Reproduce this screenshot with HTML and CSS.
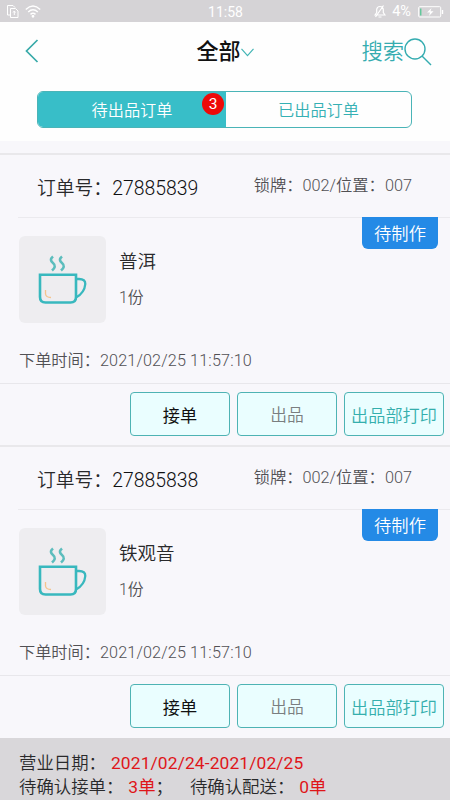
FILE: index.html
```html
<!DOCTYPE html>
<html lang="zh-CN">
<head>
<meta charset="utf-8">
<title>全部</title>
<link rel="stylesheet" href="styles.css">
</head>
<body>
<svg class="defs" width="0" height="0">
  <symbol id="cup" viewBox="0 0 87 87">
    <g fill="none" stroke="#38b8be" stroke-width="2.6">
      <path d="M21 38.800H57V61Q57 66.500 51.500 66.500H26.500Q21 66.500 21 61Z"/>
      <path d="M57 43H60Q66.500 43 66.300 48Q65.500 57 57 61.500" stroke-width="2.300"/>
      <path d="M34 20.500C31 23 31.500 25 34 27C37 29.500 36 32 33 34.500M43 20.500C40 23 40.500 25 43 27C46 29.500 45 32 42 34.500" stroke="#5cbdbd"/>
    </g>
    <path d="M26.500 54V58Q27 61.500 32 61.500" fill="none" stroke="#f5c48d" stroke-width="1.300"/>
  </symbol>
</svg>
<div class="status">
  <div class="status-left">
    <svg width="12" height="13" viewBox="0 0 12 13" fill="none" stroke="#fff"><path d="M3 10H.5V.5H6L8 2.500M3.500 3.500H8.500L11 6V12.500H3.500ZM7.300 6V10M6 7.500L7.300 6L8.500 7.500"/></svg>
    <svg width="16" height="13" viewBox="0 0 16 13" fill="none" stroke="#fff" stroke-width="1.400"><path d="M.8 4.500Q8-2.300 15.200 4.500M3.200 7Q8 2.500 12.800 7M5.500 9.400Q8 7.200 10.500 9.400"/><circle cx="8" cy="11.300" r=".7" fill="#fff"/></svg>
  </div>
  <div class="clock">11:58</div>
  <div class="status-right">
    <svg width="12" height="13" viewBox="0 0 12 13" fill="none" stroke="#fff" stroke-width="1.200"><path d="M1 10H11L9.300 7.500V4.500Q9 1.500 6 1.500Q3 1.500 2.700 4.500V7.500ZM4.500 12H7.500M9.500 .5L1.500 12"/></svg>
    <span class="percent">4%</span>
    <svg width="26" height="12" viewBox="0 0 26 12" fill="none" stroke="#fff"><rect x=".7" y=".7" width="22" height="10.300" rx="1"/><path d="M24.500 4V8" stroke-width="1.400"/><path d="M2.700 2.500V9.500" stroke="#62c79b" stroke-width="1.500"/><path d="M13.500 2L9 6.500H12L11 10L15.500 5.300H12.500Z" fill="#fff" stroke="none"/></svg>
  </div>
</div>
<header class="header">
  <div class="nav">
    <svg class="back" width="14" height="24" viewBox="0 0 14 24"><path d="M12.500 1L1.500 12L12.500 23" fill="none" stroke="#38aaa9" stroke-width="1.700"/></svg>
    <div class="title">全部<svg width="13" height="9" viewBox="0 0 13 9"><path d="M.5 .8L6.500 7.700L12.500 .8" fill="none" stroke="#43b5b5" stroke-width="1.200"/></svg></div>
    <div class="search">搜索<svg width="28" height="28" viewBox="0 0 28 28"><g fill="none" stroke="#35acb0" stroke-width="1.400"><circle cx="11" cy="11" r="10"/><path d="M18 18L27 27"/></g></svg></div>
  </div>
  <div class="tabs">
    <div class="tab active">待出品订单<span class="badge">3</span></div>
    <div class="tab">已出品订单</div>
  </div>
</header>
<main>
  <section class="order">
    <div class="order-head"><span class="number">订单号：<span class="digits">27885839</span></span><span class="place">锁牌：002/位置：007</span></div>
    <div class="order-body">
      <span class="tag">待制作</span>
      <div class="item">
        <div class="thumb"><svg width="87" height="87"><use href="#cup"/></svg></div>
        <div class="info"><div class="name">普洱</div><div class="count">1份</div></div>
      </div>
      <div class="time">下单时间：<span class="stamp">2021/02/25 11:57:10</span></div>
    </div>
    <div class="actions"><button class="btn take">接单</button><button class="btn serve">出品</button><button class="btn">出品部打印</button></div>
  </section>
  <section class="order">
    <div class="order-head"><span class="number">订单号：<span class="digits">27885838</span></span><span class="place">锁牌：002/位置：007</span></div>
    <div class="order-body">
      <span class="tag">待制作</span>
      <div class="item">
        <div class="thumb"><svg width="87" height="87"><use href="#cup"/></svg></div>
        <div class="info"><div class="name">铁观音</div><div class="count">1份</div></div>
      </div>
      <div class="time">下单时间：<span class="stamp">2021/02/25 11:57:10</span></div>
    </div>
    <div class="actions"><button class="btn take">接单</button><button class="btn serve">出品</button><button class="btn">出品部打印</button></div>
  </section>
</main>
<footer class="footer">
  <div class="line"><span>营业日期：</span><span class="red dates">2021/02/24-2021/02/25</span></div>
  <div class="line"><span>待确认接单：</span><span class="red">3单</span><span class="semi">；</span><span>待确认配送：</span><span class="red">0单</span></div>
</footer>
</body>
</html>
```

FILE: styles.css
```css
* { box-sizing: border-box; }
body {
  margin: 0;
  width: 450px;
  height: 800px;
  overflow: hidden;
  display: flex;
  flex-direction: column;
  background: #f8f7fb;
  font-family: Roboto, "Noto Sans CJK SC", sans-serif;
  font-weight: 350;
  color: #29292b;
}
svg { display: block; flex: none; }
.defs { position: absolute; }
.status {
  height: 22px;
  flex: none;
  display: grid;
  grid-template-columns: 1fr auto 1fr;
  align-items: center;
  padding: 1px 6px 0 7px;
  background: #d5d3d6;
  color: #fff;
  font-size: 14px;
}
.status-left, .status-right { display: flex; align-items: center; gap: 6px; }
.status-right { justify-content: flex-end; }
.percent { font-size: 14.500px; font-weight: 400; margin-right: 1px; }
.clock { line-height: 20px; padding-top: 1px; font-weight: 400; }
.header { height: 119px; flex: none; background: #fefefe; }
.nav {
  height: 69px;
  display: grid;
  grid-template-columns: 1fr auto 1fr;
  align-items: center;
  padding: 0 18px 11px 25px;
}
.title { display: flex; align-items: center; margin: 2px 7px 0 0; font-size: 22px; font-weight: 500; color: #111; }
.title, .search { line-height: 30px; }
.search { display: flex; align-items: center; justify-content: flex-end; padding-top: 1px; font-size: 21.300px; color: #35acb0; }
.tabs {
  height: 37px;
  width: 375px;
  margin-left: 37px;
  display: flex;
  border: 1px solid #4ab4b7;
  border-radius: 6px;
  overflow: hidden;
}
.tab {
  position: relative;
  flex: 1;
  text-align: center;
  font-size: 16.200px;
  line-height: 38px;
  color: #35b0b4;
}
.tab.active { flex: 0 0 188px; background: #38bec8; color: #fff; }
.badge {
  position: absolute;
  right: 2px;
  top: 1px;
  width: 22px;
  height: 22px;
  border-radius: 50%;
  background: #ee0909;
  color: #fff;
  font-size: 15.500px;
  line-height: 23px;
  font-weight: 400;
}
main { flex: 1; padding-top: 12px; }
.order { height: 292px; border-top: 2px solid #e9e8eb; }
.order-head {
  height: 63px;
  margin-left: 18px;
  padding: 0 38px 0 19px;
  display: flex;
  align-items: center;
  justify-content: space-between;
  border-bottom: 1px solid #ebeaee;
}
.number { font-size: 18.800px; }
.digits { font-size: 19.400px; color: #101012; }
.place { font-size: 16.300px; color: #515054; padding-bottom: 4px; }
.order-body { position: relative; height: 165px; padding: 18px 19px 0; }
.tag {
  position: absolute;
  right: 12px;
  top: -1px;
  width: 76px;
  height: 32px;
  border-radius: 0 0 6px 6px;
  background: #248ae6;
  color: #fff;
  font-size: 17.300px;
  line-height: 34px;
  text-align: center;
}
.item { display: flex; gap: 13px; }
.thumb { width: 87px; height: 87px; border-radius: 6px; background: #eeedf0; }
.info { padding-top: 12px; }
.name { font-size: 18.500px; line-height: 28px; }
.count { margin-top: 10px; font-size: 15.800px; line-height: 24px; color: #515054; }
.time { margin-top: 26px; font-size: 16.200px; line-height: 24px; color: #515054; white-space: nowrap; }
.stamp { letter-spacing: .14px; }
.actions {
  height: 62px;
  display: flex;
  justify-content: flex-end;
  gap: 7px;
  padding: 8px 6px 0 0;
  border-top: 1px solid #e8e7eb;
}
.btn {
  width: 100px;
  height: 44px;
  padding: 0;
  border: 1px solid #4eb3b4;
  border-radius: 4px;
  background: #eafeff;
  color: #35afad;
  font-family: inherit;
  font-size: 17.200px;
  font-weight: 350;
  white-space: nowrap;
}
.take { color: #111; font-weight: 400; }
.serve { color: #7a7e80; font-size: 16.800px; }
.footer { height: 62px; flex: none; padding: 13px 19px 0; background: #d9d7da; font-size: 17.400px; }
.line { display: flex; line-height: 24px; white-space: nowrap; }
.red { color: #df1519; margin-left: 5px; font-weight: 400; }
.dates { letter-spacing: .12px; }
.semi { margin-right: 17px; }
```
